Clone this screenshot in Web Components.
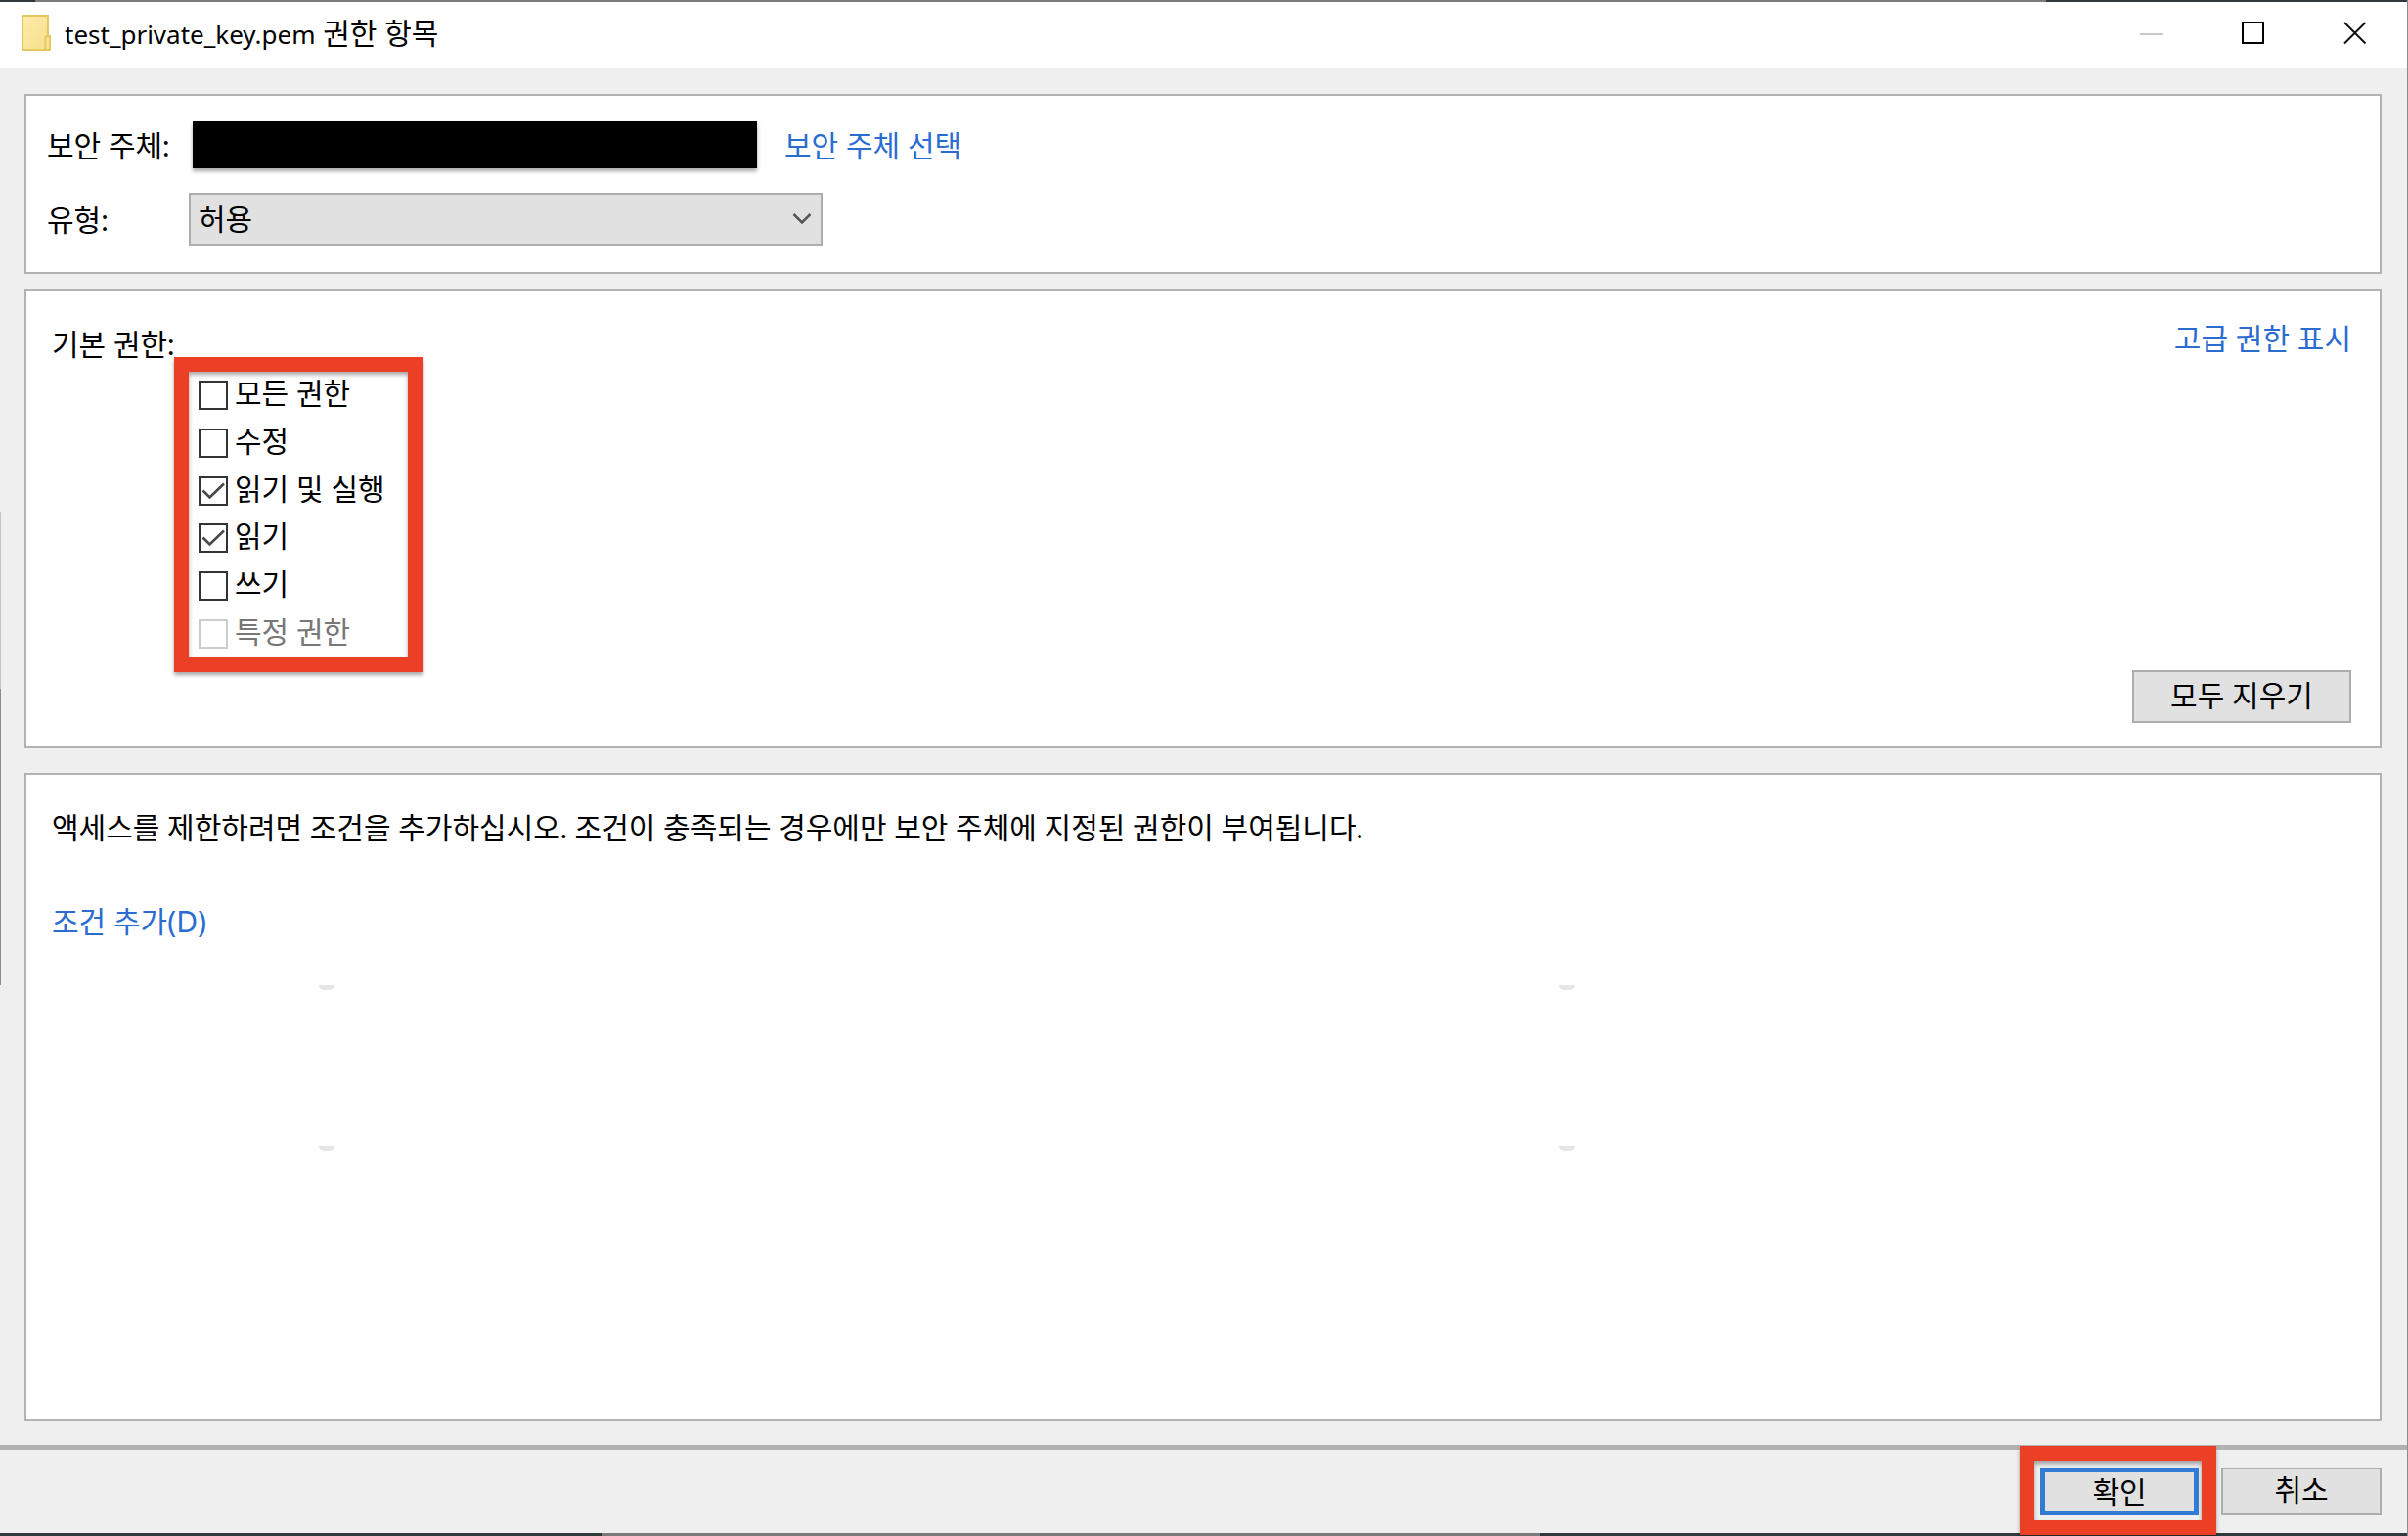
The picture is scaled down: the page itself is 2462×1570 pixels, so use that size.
<!DOCTYPE html>
<html lang="ko">
<head>
<meta charset="utf-8">
<title>test_private_key.pem 권한 항목</title>
<style>
  :root {
    --kr: Lato, "Noto Sans CJK KR", sans-serif;
    --ui: "Noto Sans", "Noto Sans CJK KR", sans-serif;
    --line: #b2b2b2;
    --face: #e1e1e1;
    --link: #2b6cd0;
    --mark: #ec4026;
  }
  body { margin: 0; background: #efefef; color: #000; font: 30px/40px var(--kr); }
</style>
</head>
<body>
<permission-dialog></permission-dialog>

<template id="t-dialog">
  <style>
    :host { display: flex; flex-direction: column; min-height: 100vh; box-sizing: border-box;
      border-right: 1px solid #8c8c8c; position: relative; }
    .edge-top { height: 2px; background: linear-gradient(90deg, #333638 36px, #7b7b7b 36px, #7b7b7b 85%, #34383c 85%); }
    .edge-bottom { height: 3px; background: linear-gradient(90deg, #30393c 25%, #7b7b7b 25%, #7b7b7b 64%, #30393c 64%); }
    .edge-left { position: absolute; left: 0; top: 523px; width: 1px; height: 484px;
      background: linear-gradient(#c4c4c4 181px, #8c8c8c 181px); }
    main { flex: 1; display: flex; flex-direction: column; padding: 26px 26px 25px 25px; }
    .who { padding: 26px 21px 27px; display: grid; grid-template-columns: 145px 1fr; row-gap: 25px; align-items: center; }
    .account { display: flex; align-items: center; gap: 28px; padding-left: 4px; }
    .redacted { width: 577px; height: 48px; background: #000; box-shadow: 0 3px 4px rgba(0,0,0,.35); }
    .basic { margin-top: 15px; padding: 28px 29px 24px 26px; display: flex; justify-content: space-between; height: 414px; }
    .basic h2 { margin: 12px 0 0; font: inherit; line-height: 28px; }
    .perm { width: 378px; }
    .right { display: flex; flex-direction: column; justify-content: space-between; align-items: flex-end; }
    mark-frame.list { margin: 0 0 0 125px; }
    .checks { height: 274px; padding: 9px 10px; display: flex; flex-direction: column; justify-content: space-between; width: 204px; }
    .cond { flex: 1; margin-top: 25px; padding: 33px 26px; position: relative; }
    .cond p { margin: 0 0 56px; }
    .speck { position: absolute; width: 16px; height: 5px; background: #e6e6e6; border-radius: 0 0 8px 8px; }
    footer { border-top: 5px solid var(--line); height: 85px; display: flex; justify-content: flex-end;
      align-items: flex-start; gap: 5px; padding-right: 26px; }
    footer mark-frame { margin-top: -4px; z-index: 1; }
    footer > win-button { margin-top: 18px; }
    .ok { padding: 7px 3px 5px 6px; }
    small { font-size: 26px; }
  </style>
  <div class="edge-top"></div>
  <title-bar><small>test_private_key.pem</small> 권한 항목</title-bar>
  <main>
    <group-panel><div class="who">
      <span>보안 주체:</span>
      <div class="account"><div class="redacted"></div><text-link>보안 주체 선택</text-link></div>
      <span>유형:</span>
      <win-select label="유형" value="허용"></win-select>
    </div></group-panel>
    <group-panel><div class="basic">
      <div class="perm">
        <h2>기본 권한:</h2>
        <mark-frame class="list"><div class="checks">
          <check-row>모든 권한</check-row>
          <check-row>수정</check-row>
          <check-row checked>읽기 및 실행</check-row>
          <check-row checked>읽기</check-row>
          <check-row>쓰기</check-row>
          <check-row disabled>특정 권한</check-row>
        </div></mark-frame>
      </div>
      <div class="right">
        <text-link>고급 권한 표시</text-link>
        <win-button class="clear" style="--w:224px;--h:54px">모두 지우기</win-button>
      </div>
    </div></group-panel>
    <group-panel class="grow"><div class="cond">
      <p>액세스를 제한하려면 조건을 추가하십시오. 조건이 충족되는 경우에만 보안 주체에 지정된 권한이 부여됩니다.</p>
      <text-link>조건 추가(D)</text-link>
      <i class="speck" style="left:299px;top:215px"></i><i class="speck" style="left:1567px;top:215px"></i>
      <i class="speck" style="left:299px;top:379px"></i><i class="speck" style="left:1567px;top:379px"></i>
    </div></group-panel>
  </main>
  <footer>
    <mark-frame><div class="ok"><win-button primary style="--w:162px;--h:49px">확인</win-button></div></mark-frame>
    <win-button style="--w:164px;--h:49px">취소</win-button>
  </footer>
  <div class="edge-bottom"></div>
  <div class="edge-left"></div>
</template>

<template id="t-title">
  <style>
    :host { display: flex; align-items: center; height: 64px; background: #fff; padding: 0 41px 4px 22px; font-family: var(--ui); }
    .folder { width: 30px; height: 38px; margin-right: 14px; }
    .text { flex: 1; }
    button { border: 0; background: none; padding: 0; width: 24px; height: 24px; margin-left: 80px; display: block; }
    button svg { display: block; }
    .group { display: flex; }
  </style>
  <svg class="folder" viewBox="0 0 30 38" aria-hidden="true">
    <defs><linearGradient id="g" x1="0" y1="0" x2="1" y2="1"><stop offset="0" stop-color="#fdebaa"/><stop offset="1" stop-color="#f7df8b"/></linearGradient></defs>
    <path d="M1 1h26v21h2v14H1z" fill="url(#g)" stroke="#e6c75f" stroke-width="2"/>
    <path d="M24.500 36V24q0-2 2.500-2h2v14z" fill="#f9e596" stroke="#e6c75f" stroke-width="2"/>
  </svg>
  <span class="text"><slot></slot></span>
  <span class="group">
    <button aria-label="최소화" disabled><svg width="24" height="24"><path d="M0 13h23" stroke="#c8c8c8" stroke-width="2"/></svg></button>
    <button aria-label="최대화"><svg width="24" height="24"><path d="M1 1h21v21H1z" fill="none" stroke="#000" stroke-width="2"/></svg></button>
    <button aria-label="닫기"><svg width="24" height="24"><path d="M1 1l21.500 21.500M22.500 1L1 22.500" stroke="#111" stroke-width="2"/></svg></button>
  </span>
</template>

<template id="t-panel">
  <style>
    :host { display: flex; flex-direction: column; }
    :host(.grow) { flex: 1; }
    ::slotted(*) { border: 2px solid var(--line); background: #fff; }
  </style>
  <slot></slot>
</template>

<template id="t-frame">
  <style>
    :host { display: block; width: max-content; border: 15px solid var(--mark); position: relative;
      box-shadow: 0 3px 4px rgba(0,0,0,.35), inset 0 3px 4px rgba(0,0,0,.35); }
  </style>
  <slot></slot>
</template>

<template id="t-link">
  <style>
    :host { display: block; }
    a { color: var(--link); text-decoration: none; font-family: var(--ui); white-space: nowrap; }
  </style>
  <a href="#"><slot></slot></a>
</template>

<template id="t-button">
  <style>
    :host { display: block; }
    button { display: block; box-sizing: border-box; width: var(--w); height: var(--h); padding: 0 0 3px; margin: 0;
      border: 2px solid #adadad; background: var(--face); color: #000; font: 30px/40px var(--ui); border-radius: 0; }
    :host([primary]) button { border: 5px solid #327bd3; }
  </style>
  <button type="button"><slot></slot></button>
</template>

<template id="t-select">
  <style>
    :host { display: grid; width: 648px; align-items: center; }
    select, svg { grid-area: 1 / 1; }
    select { appearance: none; width: 100%; height: 54px; margin: 0; padding: 0 8px 2px 8px; border: 2px solid #adadad;
      border-radius: 0; background: var(--face); color: #000; font: 30px/40px var(--kr); }
    svg { justify-self: end; margin-right: 11px; pointer-events: none; }
  </style>
  <select><option></option></select>
  <svg width="20" height="14" viewBox="0 0 20 14" aria-hidden="true"><path d="M1.500 2l8.500 8.500L18.500 2" fill="none" stroke="#555" stroke-width="2.500"/></svg>
</template>

<template id="t-check">
  <style>
    :host { display: block; height: 30px; }
    label { display: flex; align-items: center; gap: 7px; height: 30px; font-family: var(--ui); white-space: nowrap; }
    .box { display: grid; }
    input, svg { grid-area: 1 / 1; }
    input { appearance: none; width: 30px; height: 30px; margin: 0; border: 2px solid #333; background: #fff; }
    svg { display: none; pointer-events: none; }
    input:checked + svg { display: block; }
    input:disabled { border-color: #ccc; }
    .text { padding-bottom: 4px; }
    :host([disabled]) .text { color: #777; }
  </style>
  <label><span class="box"><input type="checkbox"><svg width="30" height="30" aria-hidden="true"><path d="M4.500 14.500L11.500 21.500L26 7.500" fill="none" stroke="#484848" stroke-width="2.600"/></svg></span><span class="text"><slot></slot></span></label>
</template>

<script>
  const define = (name, templateId, setup) => customElements.define(name, class extends HTMLElement {
    constructor() {
      super();
      this.attachShadow({ mode: "open" }).append(document.getElementById(templateId).content.cloneNode(true));
    }
    connectedCallback() { if (setup) setup(this, this.shadowRoot); }
  });
  define("title-bar", "t-title");
  define("group-panel", "t-panel");
  define("mark-frame", "t-frame");
  define("text-link", "t-link");
  define("win-button", "t-button");
  define("win-select", "t-select", (host, root) => {
    root.querySelector("select").setAttribute("aria-label", host.getAttribute("label"));
    root.querySelector("option").textContent = host.getAttribute("value");
  });
  define("check-row", "t-check", (host, root) => {
    const input = root.querySelector("input");
    input.checked = host.hasAttribute("checked");
    input.disabled = host.hasAttribute("disabled");
  });
  define("permission-dialog", "t-dialog");
</script>
</body>
</html>
